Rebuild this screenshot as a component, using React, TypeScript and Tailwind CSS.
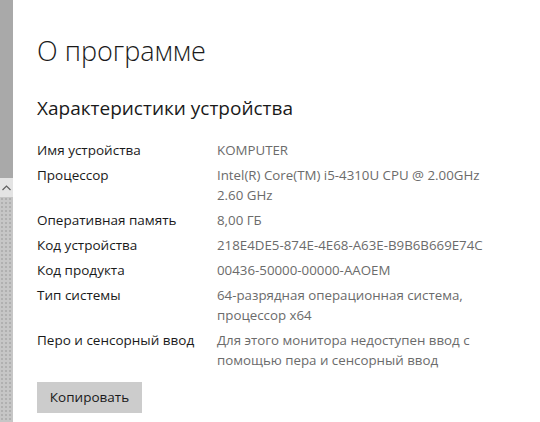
import React from 'react';

const rows: { label: string; value: string[] }[] = [
  { label: 'Имя устройства', value: ['KOMPUTER'] },
  { label: 'Процессор', value: ['Intel(R) Core(TM) i5-4310U CPU @ 2.00GHz', '2.60 GHz'] },
  { label: 'Оперативная память', value: ['8,00 ГБ'] },
  { label: 'Код устройства', value: ['218E4DE5-874E-4E68-A63E-B9B6B669E74C'] },
  { label: 'Код продукта', value: ['00436-50000-00000-AAOEM'] },
  { label: 'Тип системы', value: ['64-разрядная операционная система,', 'процессор x64'] },
  { label: 'Перо и сенсорный ввод', value: ['Для этого монитора недоступен ввод с', 'помощью пера и сенсорный ввод'] },
];

const App: React.FC = () => {
  return (
    <div className="w-[540px] h-[422px] bg-white flex overflow-hidden" style={{ fontFamily: '"Open Sans", "Noto Sans", sans-serif' }}>
      {/* scrollbar strip */}
      <div className="w-[13px] flex flex-col shrink-0">
        <div className="h-[178px] bg-[#a9a9a9]" />
        <div className="h-[19px] bg-[#e4e4e4] flex items-center justify-center">
          <svg width="9" height="6" viewBox="0 0 9 6" fill="none">
            <path d="M0.5 5 L4.5 1 L8.5 5" stroke="#606060" strokeWidth="1.2" />
          </svg>
        </div>
        <div className="flex-1 bg-[#c6c6c6] bg-[radial-gradient(#b0b0b0_1px,transparent_1px)] bg-[length:4px_4px]" />
      </div>

      <div className="flex-1 pl-6 pt-[33px]">
        <h1 className="text-[27px] font-light text-[#1a1a1a] leading-9">О программе</h1>
        <h2 className="mt-[25px] text-[19px] text-[#1a1a1a] leading-7">Характеристики устройства</h2>

        <div className="mt-[18px] flex flex-col gap-[5px] text-[13.5px] leading-5">
          {rows.map((r) => (
            <div key={r.label} className="flex">
              <div className="w-[180px] shrink-0 text-[#1a1a1a]">{r.label}</div>
              <div className="text-[#6b6b6b] text-[13.3px]">
                {r.value.map((v) => (
                  <div key={v}>{v}</div>
                ))}
              </div>
            </div>
          ))}
        </div>

        <button className="mt-[12px] w-[105px] h-[31px] bg-[#cccccc] text-[13.5px] text-[#1a1a1a]">
          Копировать
        </button>
      </div>
    </div>
  );
};

export default App;
